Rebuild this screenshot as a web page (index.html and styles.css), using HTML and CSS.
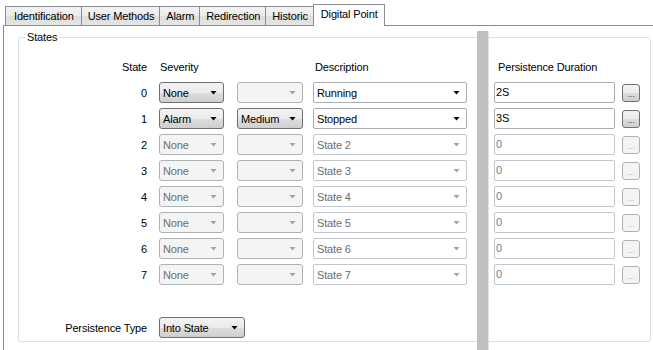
FILE: index.html
```html
<!DOCTYPE html>
<html lang="en">
<head>
    <meta charset="UTF-8">
    <title>Digital Point</title>
    <link rel="stylesheet" href="styles.css">
</head>
<body>

    <div class="tabs">
        <div class="tab">Identification</div>
        <div class="tab">User Methods</div>
        <div class="tab">Alarm</div>
        <div class="tab">Redirection</div>
        <div class="tab">Historic</div>
        <div class="tab active">Digital Point</div>
    </div>

    <div class="panel">
        <fieldset class="group">
            <legend>States</legend>

            <div class="row head">
                <div class="num">State</div>
                <div class="sev">Severity</div>
                <div class="lvl"></div>
                <div class="desc">Description</div>
                <div class="dur">Persistence Duration</div>
            </div>

            <div class="row">
                <div class="num">0</div>
                <div class="sev combo btn"><span>None</span><i class="arrow"></i></div>
                <div class="lvl combo off"><span></span><i class="arrow"></i></div>
                <div class="desc combo edit"><span>Running</span><i class="arrow"></i></div>
                <div class="dur box">2S</div>
                <div class="more">...</div>
            </div>

            <div class="row">
                <div class="num">1</div>
                <div class="sev combo btn"><span>Alarm</span><i class="arrow"></i></div>
                <div class="lvl combo btn"><span>Medium</span><i class="arrow"></i></div>
                <div class="desc combo edit"><span>Stopped</span><i class="arrow"></i></div>
                <div class="dur box">3S</div>
                <div class="more">...</div>
            </div>

            <div class="row">
                <div class="num">2</div>
                <div class="sev combo off"><span>None</span><i class="arrow"></i></div>
                <div class="lvl combo off"><span></span><i class="arrow"></i></div>
                <div class="desc combo edit off"><span>State 2</span><i class="arrow"></i></div>
                <div class="dur box off">0</div>
                <div class="more off">...</div>
            </div>

            <div class="row">
                <div class="num">3</div>
                <div class="sev combo off"><span>None</span><i class="arrow"></i></div>
                <div class="lvl combo off"><span></span><i class="arrow"></i></div>
                <div class="desc combo edit off"><span>State 3</span><i class="arrow"></i></div>
                <div class="dur box off">0</div>
                <div class="more off">...</div>
            </div>

            <div class="row">
                <div class="num">4</div>
                <div class="sev combo off"><span>None</span><i class="arrow"></i></div>
                <div class="lvl combo off"><span></span><i class="arrow"></i></div>
                <div class="desc combo edit off"><span>State 4</span><i class="arrow"></i></div>
                <div class="dur box off">0</div>
                <div class="more off">...</div>
            </div>

            <div class="row">
                <div class="num">5</div>
                <div class="sev combo off"><span>None</span><i class="arrow"></i></div>
                <div class="lvl combo off"><span></span><i class="arrow"></i></div>
                <div class="desc combo edit off"><span>State 5</span><i class="arrow"></i></div>
                <div class="dur box off">0</div>
                <div class="more off">...</div>
            </div>

            <div class="row">
                <div class="num">6</div>
                <div class="sev combo off"><span>None</span><i class="arrow"></i></div>
                <div class="lvl combo off"><span></span><i class="arrow"></i></div>
                <div class="desc combo edit off"><span>State 6</span><i class="arrow"></i></div>
                <div class="dur box off">0</div>
                <div class="more off">...</div>
            </div>

            <div class="row">
                <div class="num">7</div>
                <div class="sev combo off"><span>None</span><i class="arrow"></i></div>
                <div class="lvl combo off"><span></span><i class="arrow"></i></div>
                <div class="desc combo edit off"><span>State 7</span><i class="arrow"></i></div>
                <div class="dur box off">0</div>
                <div class="more off">...</div>
            </div>

            <div class="row type">
                <div class="num">Persistence Type</div>
                <div class="ptype combo btn"><span>Into State</span><i class="arrow"></i></div>
            </div>
        </fieldset>

        <div class="splitter"></div>
    </div>

</body>
</html>
```

FILE: styles.css
```css
body {
    margin: 0;
    background: #fff;
    font-family: "Liberation Sans", Arial, sans-serif;
    font-size: 11px;
    letter-spacing: -0.15px;
    color: #000;
    overflow: hidden;
}
.tabs {
    display: flex;
    align-items: flex-end;
    height: 21px;
    padding: 4px 0 0 5px;
    position: relative;
    z-index: 1;
}
.tab {
    height: 18px;
    line-height: 19px;
    padding: 0 5px 0 6px;
    border: 1px solid #898c95;
    border-bottom: none;
    margin-left: -1px;
    background: linear-gradient(#f3f3f3, #ebebeb 50%, #dedede 51%, #e4e4e4);
}
.tab:first-child {
    margin-left: 0;
    padding: 0 7px 0 8px;
}
.tab.active {
    height: 21px;
    line-height: 18px;
    margin-bottom: -1px;
    padding: 0 6px 0 7px;
    background: #fff;
}
.panel {
    position: relative;
    margin-left: 3px;
    height: 330px;
    border-top: 1px solid #898c95;
    border-left: 1px solid #898c95;
}
.group {
    margin: 5px 0 0 14px;
    padding: 0;
    width: 631px;
    height: 309px;
    border: 1px solid #d5dfe5;
    border-radius: 3px;
    box-sizing: content-box;
}
.group legend {
    margin-left: 6px;
    padding: 0 2px;
    line-height: 13px;
}
.row {
    display: flex;
    align-items: center;
    height: 21px;
    margin-bottom: 5px;
}
.row.head {
    margin-top: 12px;
}
.row.type {
    margin-top: 32px;
}
.num {
    width: 128px;
    text-align: right;
}
.sev {
    margin-left: 12px;
    width: 65px;
}
.lvl {
    margin-left: 13px;
    width: 66px;
}
.desc {
    margin-left: 10px;
    width: 154px;
}
.dur {
    margin-left: 27px;
    width: 121px;
}
.ptype {
    margin-left: 12px;
    width: 86px;
}
.head .sev, .head .desc {
    padding-left: 1px;
}
.head .dur {
    padding-left: 2px;
}
.combo {
    box-sizing: border-box;
    height: 21px;
    display: flex;
    align-items: center;
    justify-content: space-between;
    padding: 0 6px 0 3px;
    border: 1px solid #707070;
    border-radius: 3px;
}
.combo.btn {
    background: linear-gradient(#f2f2f2, #ebebeb 50%, #dddddd 51%, #cfcfcf);
}
.combo.off {
    background: #f4f4f4;
    border-color: #adb2b5;
    color: #6d6d6d;
}
.combo.edit {
    background: #fff;
    border-color: #abadb3;
    border-radius: 2px;
}
.combo.edit.off {
    border-color: #c3c6cc;
}
.arrow {
    width: 7px;
    height: 4px;
    background: #000;
    clip-path: polygon(0 0, 100% 0, 50% 100%);
}
.off .arrow {
    background: #a3a3a3;
}
.box {
    box-sizing: border-box;
    height: 21px;
    line-height: 19px;
    padding-left: 1px;
    border: 1px solid #abadb3;
    border-radius: 2px;
    background: #fff;
}
.box.off {
    border-color: #c3c6cc;
    color: #6d7fa0;
}
.more {
    box-sizing: border-box;
    margin-left: 7px;
    width: 18px;
    height: 18px;
    line-height: 18px;
    text-align: center;
    font-size: 9px;
    color: #3c3c78;
    border: 1px solid #707070;
    border-radius: 3px;
    background: linear-gradient(#f2f2f2, #ebebeb 50%, #dddddd 51%, #cfcfcf);
}
.more.off {
    border-color: #adb2b5;
    background: #f4f4f4;
    color: #b0b0b0;
}
.splitter {
    position: absolute;
    left: 473px;
    top: 5px;
    width: 11px;
    height: 330px;
    background: #c0c0c0;
    border-right: 1px solid #dde4ea;
}
```
